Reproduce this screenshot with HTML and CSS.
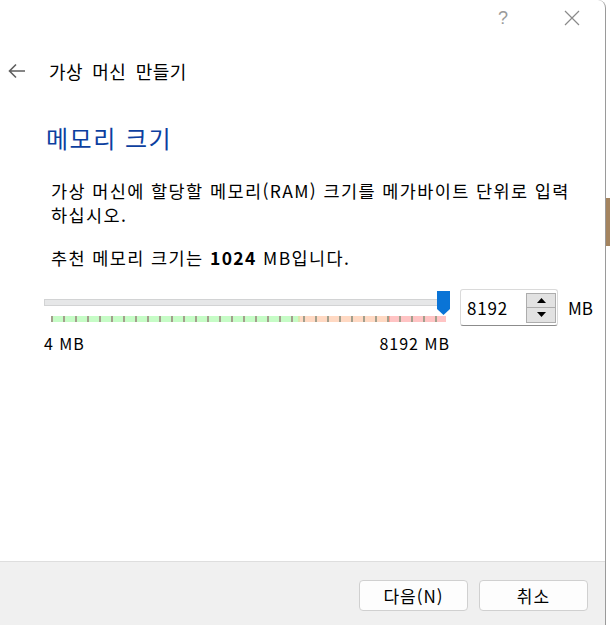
FILE: index.html
```html
<!DOCTYPE html>
<html lang="ko">
<head>
<meta charset="utf-8">
<title>가상 머신 만들기</title>
<link rel="stylesheet" href="styles.css">
</head>
<body>
<div class="window">
  <div class="titlebar">
    <span class="help">?</span>
    <svg class="close" width="16" height="16" viewBox="0 0 16 16"><path d="M1 1L15 15M15 1L1 15" stroke="#8a8a8a" stroke-width="1.2" fill="none"/></svg>
  </div>
  <div class="header">
    <svg class="back" width="18" height="16" viewBox="0 0 18 16"><path d="M1.5 8H17M8 1.5L1.5 8L8 14.5" stroke="#5f5f5f" stroke-width="1.6" fill="none"/></svg>
    <span class="wiz-title">가상 머신 만들기</span>
  </div>
  <main class="content">
    <h1 class="page-title">메모리 크기</h1>
    <p class="desc">가상 머신에 할당할 메모리(RAM) 크기를 메가바이트 단위로 입력<br>하십시오.</p>
    <p class="desc rec">추천 메모리 크기는 <b>1024</b> MB입니다.</p>
    <div class="mem-row">
      <div class="slider">
        <div class="track"><div class="handle"></div></div>
        <div class="ticks"></div>
        <div class="scale-labels"><span>4 MB</span><span>8192 MB</span></div>
      </div>
      <div class="spin-group">
        <div class="spin">
          <span class="spin-value">8192</span>
          <div class="spin-btns">
            <span class="spin-btn"><svg width="9" height="5" viewBox="0 0 9 5"><path d="M0 5L4.5 0L9 5Z" fill="#000"/></svg></span>
            <span class="spin-btn"><svg width="9" height="5" viewBox="0 0 9 5"><path d="M0 0L4.5 5L9 0Z" fill="#000"/></svg></span>
          </div>
        </div>
        <span class="unit">MB</span>
      </div>
    </div>
  </main>
  <footer class="footer">
    <button class="btn">다음(N)</button>
    <button class="btn">취소</button>
  </footer>
</div>
</body>
</html>
```
FILE: styles.css
```css
html {
  background: linear-gradient(#ffffff 0 198px, #a4845f 198px 246px, #ffffff 246px);
}
body {
  margin: 0;
  font-family: "Noto Sans CJK KR", "Noto Sans", sans-serif;
  color: #000;
}
.window {
  width: 606px;
  height: 625px;
  box-sizing: border-box;
  background: #fff;
  border-right: 1px solid #9a9a9a;
  border-top-right-radius: 8px;
  display: flex;
  flex-direction: column;
}
.titlebar {
  height: 36px;
  display: flex;
  align-items: center;
  justify-content: flex-end;
  padding-right: 25px;
  gap: 56px;
}
.help {
  font-family: "Liberation Sans", sans-serif;
  font-size: 18px;
  color: #9a9a9a;
  line-height: 1;
}
.close { display: block; }
.header {
  margin-top: 20px;
  height: 30px;
  display: flex;
  align-items: center;
  padding-left: 8px;
}
.back { display: block; margin-right: 23px; }
.wiz-title {
  font-size: 18px;
  line-height: 30px;
  word-spacing: 4px;
  letter-spacing: 0.4px;
}
.content {
  flex: 1;
  padding-left: 44px;
}
.page-title {
  margin: 36px 0 0 2px;
  font-weight: normal;
  font-size: 24px;
  line-height: 32px;
  letter-spacing: 1.5px;
  color: #0c3f9f;
}
.desc {
  margin: 25px 0 0 7px;
  font-size: 17.5px;
  line-height: 24px;
  letter-spacing: 1.4px;
  white-space: nowrap;
}
.desc.rec { margin-top: 19px; }
.desc b { font-weight: bold; }
.mem-row {
  margin-top: 17px;
  display: flex;
  align-items: flex-start;
}
.slider {
  width: 405px;
  padding-top: 12px;
}
.track {
  position: relative;
  height: 7px;
  box-sizing: border-box;
  background: #e6e7e8;
  border: 1px solid #d2d3d4;
}
.handle {
  position: absolute;
  left: 392px;
  top: -9px;
  width: 13px;
  height: 24px;
  background: #0a74d6;
  clip-path: polygon(0 0, 100% 0, 100% 75%, 50% 100%, 0 75%);
}
.ticks {
  margin: 10px 3px 0 7px;
  height: 6px;
  background:
    repeating-linear-gradient(90deg, #a39f8c 0 2px, transparent 2px 12px),
    linear-gradient(90deg, #c6fcc6 0 247px, #dbe7ad 247px 249px, #ffd9c3 249px 336px, #ff9f8f 336px 339px, #ffc4c4 339px);
}
.scale-labels {
  margin-top: 11px;
  display: flex;
  justify-content: space-between;
  font-size: 16px;
  line-height: 20px;
  letter-spacing: 1px;
}
.scale-labels span:last-child { margin-right: -1px; }
.spin-group {
  margin-left: 11px;
  margin-top: 2px;
  display: flex;
  align-items: center;
  gap: 10px;
}
.spin {
  width: 98px;
  height: 37px;
  box-sizing: border-box;
  border: 1px solid #dadada;
  border-bottom-color: #8c8c8c;
  border-radius: 3px;
  display: flex;
  align-items: center;
  justify-content: space-between;
  padding: 0 1px 0 6px;
}
.spin-value {
  font-size: 17px;
  line-height: 20px;
  letter-spacing: 0.8px;
}
.spin-btns {
  display: flex;
  flex-direction: column;
  width: 30px;
}
.spin-btn {
  height: 15px;
  box-sizing: border-box;
  background: #e2e2e2;
  border: 1px solid #adadad;
  display: flex;
  align-items: center;
  justify-content: center;
}
.spin-btn + .spin-btn { border-top: none; height: 15px; }
.spin-btn svg { display: block; }
.unit {
  font-size: 17px;
  line-height: 20px;
}
.footer {
  height: 64px;
  box-sizing: border-box;
  background: #f0f0f0;
  border-top: 1px solid #dedede;
  display: flex;
  justify-content: flex-end;
  align-items: flex-start;
  padding: 18px 17px 0 0;
  gap: 11px;
}
.btn {
  width: 109px;
  height: 31px;
  box-sizing: border-box;
  background: #fdfdfd;
  border: 1px solid #d0d0d0;
  border-radius: 4px;
  font-family: "Noto Sans CJK KR", sans-serif;
  font-size: 17px;
  letter-spacing: 1px;
  color: #000;
  padding: 0;
}
```
